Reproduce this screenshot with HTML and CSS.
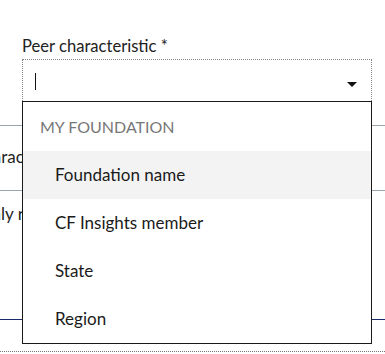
FILE: index.html
```html
<!DOCTYPE html>
<html lang="en">
<head>
    <meta charset="UTF-8">
    <meta name="viewport" content="width=device-width, initial-scale=1.0">
    <title>Peer characteristic</title>
    <link rel="stylesheet" href="styles.css">
</head>
<body>
    <div class="form">
        <label class="label" for="peer">Peer characteristic *</label>
        <div class="select">
            <div class="field" id="peer">
                <span class="caret"></span>
                <span class="arrow"></span>
            </div>
            <ul class="menu">
                <li class="menu-group">MY FOUNDATION</li>
                <li class="menu-item active">Foundation name</li>
                <li class="menu-item">CF Insights member</li>
                <li class="menu-item">State</li>
                <li class="menu-item">Region</li>
            </ul>
        </div>
    </div>

    <div class="table">
        <div class="table-head"></div>
        <div class="table-row"><span class="cut-a">Characteristic</span></div>
        <div class="table-row last"><span class="cut-b">Only required</span></div>
        <div class="table-foot"></div>
    </div>
</body>
</html>
```

FILE: styles.css
```css
body {
    margin: 0;
    font-family: Lato, "Open Sans", sans-serif;
    color: #1f1f1f;
    background: #fff;
    overflow: hidden;
}

.form {
    padding: 36px 0 0 22px;
}

.label {
    display: block;
    font-size: 16.6px;
    line-height: 20px;
    margin-bottom: 3px;
    color: #222;
}

.select {
    position: relative;
    width: 350px;
}

.field {
    position: relative;
    height: 41px;
    border: 1px dotted #888;
    border-bottom: none;
}

.caret {
    position: absolute;
    left: 12px;
    top: 13px;
    width: 1px;
    height: 17px;
    background: #111;
}

.arrow {
    position: absolute;
    right: 14px;
    top: 22px;
    width: 0;
    height: 0;
    border-left: 5px solid transparent;
    border-right: 5px solid transparent;
    border-top: 5px solid #111;
}

.menu {
    position: absolute;
    z-index: 2;
    top: 42px;
    left: 0;
    width: 348px;
    margin: 0;
    padding: 0;
    list-style: none;
    background: #fff;
    border: 1px solid #1a1a1a;
}

.menu-group {
    height: 49px;
    line-height: 49px;
    padding-left: 17px;
    font-size: 16px;
    color: #777;
}

.menu-item {
    height: 48px;
    line-height: 48px;
    padding-left: 32px;
    font-size: 17px;
    color: #1a1a1a;
}

.menu-item.active {
    background: #f3f3f3;
}

.table-head {
    height: 24px;
    border-bottom: 1px solid #9ba5ae;
}

.table-row {
    height: 43px;
    padding-top: 21px;
    border-bottom: 1px solid #9ba5ae;
    font-size: 17px;
    line-height: 20px;
    white-space: nowrap;
}

.table-row.last {
    height: 115px;
    padding-top: 13px;
    border-bottom-color: #1b2a6b;
}

.cut-a {
    margin-left: -28px;
}

.cut-b {
    margin-left: -22px;
}

.table-foot {
    height: 31px;
    border-bottom: 1px dotted #777;
}
```
